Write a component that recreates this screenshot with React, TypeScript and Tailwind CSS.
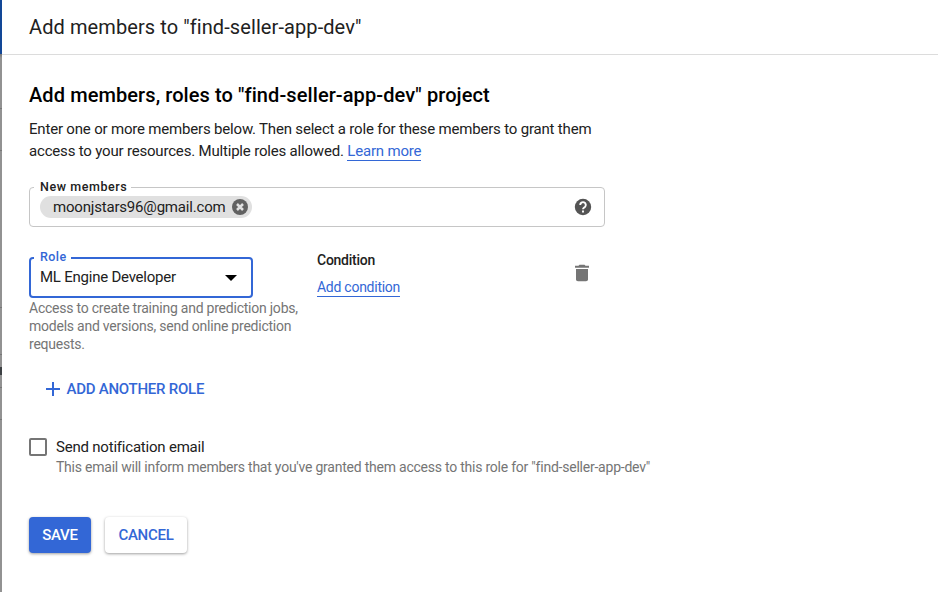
function BackgroundPage() {
  return (
    <div className="relative h-full w-[2px] shrink-0 bg-[#929292]">
      <div className="h-[54px] bg-[#124797]" />
      <div className="h-[4px] bg-gradient-to-b from-[#777] to-[#929292]" />
      <div className="absolute top-[108px] h-px w-full bg-[#777]" />
      <div className="absolute top-[150px] h-px w-full bg-[#777]" />
      <div className="absolute top-[307px] h-px w-full bg-[#777]" />
      <div className="absolute top-[354px] h-px w-full bg-[#777]" />
      <div className="absolute top-[367px] h-[8px] w-full bg-[#3c4043]" />
      <div className="absolute top-[387px] h-px w-full bg-[#777]" />
      <div className="absolute top-[419px] h-px w-full bg-[#777]" />
    </div>
  );
}

export default function App() {
  return (
    <main className="flex h-[592px] w-full overflow-hidden bg-white font-['Roboto',sans-serif] text-[#212121]">
      <BackgroundPage />
      <div className="min-w-0 flex-1 whitespace-nowrap">
        <header className="flex h-[55px] items-center border-b border-[#dcdcdc] pl-[27px] text-[20px] tracking-[0.09px]">
          Add members to "find-seller-app-dev"
        </header>
        <form className="pl-[27px] pt-7">
          <h1 className="text-[20px] font-medium leading-6 tracking-[0.09px] text-black">
            Add members, roles to "find-seller-app-dev" project
          </h1>
          <p className="mt-[11px] text-[15px] leading-[22px] tracking-[-0.185px]">
            Enter one or more members below. Then select a role for these members to grant them
            <br />
            access to your resources. Multiple roles allowed.{" "}
            <a className="inline-block h-[20px] border-b border-[#3367d6] leading-[20px] text-[#3367d6]">Learn more</a>
          </p>

          <div className="relative mt-[25px] flex h-[40px] w-[576px] items-center justify-between rounded-[4px] border border-[#c6c6c6] pl-[10px] pr-[11.5px]">
            <label className="absolute -top-[9px] left-[4px] bg-white pl-[6px] pr-[4px] text-[12.5px] font-medium leading-4 tracking-[0.57px]">New members</label>
            <div className="flex h-[22px] w-[212px] items-center rounded-full bg-[#e0e0e0] pl-[13px] text-[15px] leading-[22px] tracking-[-0.19px]">
              <span className="w-[177px]">moonjstars96@gmail.com</span>
              <svg viewBox="0 0 20 20" className="size-5">
                <circle cx="10" cy="10" r="8" fill="#616161" />
                <path d="M7 7l6 6M13 7l-6 6" stroke="#e0e0e0" strokeWidth="2.5" />
              </svg>
            </div>
            <svg viewBox="0 0 20 20" className="-mt-px size-5">
              <circle cx="10" cy="10" r="8.2" fill="#545454" />
              <path d="M7.200 8a2.800 2.800 0 1 1 4.700 2c-1.100.9-1.900 1.200-1.900 2.300M10 13.500v2" fill="none" stroke="#fff" strokeWidth="1.900" />
            </svg>
          </div>

          <div className="mt-[30px] flex">
            <div className="w-[289px]">
              <div className="relative flex h-[41px] w-[224px] items-center justify-between rounded-[4px] border-2 border-[#3367d6] pl-[9px] pr-[14px] text-[15px] tracking-[-0.23px]">
                <label className="absolute -top-[10px] left-[3px] bg-white pl-[6px] pr-[4px] text-[12.5px] font-medium leading-4 tracking-[0.44px] text-[#3367d6]">Role</label>
                <span>ML Engine Developer</span>
                <svg viewBox="0 0 12 6" className="h-[6px] w-[12px]"><path d="M0 0h12L6 6z" /></svg>
              </div>
              <p className="mt-px text-[14px] leading-[18px] tracking-[-0.23px] text-[#757575]">
                Access to create training and prediction jobs,<br />models and versions, send online prediction<br />requests.
              </p>
            </div>
            <div className="-ml-px flex w-[258px] flex-col items-start">
              <div className="-mt-[7px] h-5 text-[14px] font-medium leading-5 tracking-[-0.26px]">Condition</div>
              <a className="mt-[8px] h-[19px] border-b border-[#3367d6] text-[14px] leading-[19px] tracking-[-0.26px] text-[#3367d6]">Add condition</a>
            </div>
            <svg viewBox="0 0 14 18" className="mt-[7px] h-[18px] w-[14px]" fill="#757575">
              <path d="M1 15.500c0 1.100.9 1.700 2 1.700h8c1.100 0 2-.6 2-1.700V5H1v10.500zM14 1.700h-3.500l-1-1h-5l-1 1H0v2h14v-2z" />
            </svg>
          </div>

          <button type="button" className="ml-[15.5px] mt-[26px] flex h-5 items-center text-[15px] font-medium leading-5 tracking-[-0.25px] text-[#3367d6]">
            <svg viewBox="0 0 16 16" className="mr-[6px] size-4"><path d="M8 1v14M1 8h14" stroke="currentColor" strokeWidth="2" /></svg>
            ADD ANOTHER ROLE
          </button>

          <div className="mt-[38px] flex">
            <span className="mt-px size-[18px] rounded-[2px] border-2 border-[#757575]" />
            <div className="ml-[9px]">
              <div className="text-[15px] leading-5 tracking-[-0.21px]">Send notification email</div>
              <p className="text-[14px] leading-5 tracking-[-0.23px] text-[#757575]">This email will inform members that you've granted them access to this role for "find-seller-app-dev"</p>
            </div>
          </div>

          <div className="mt-[40px] flex gap-[14px] text-[15px] font-medium tracking-[-0.25px]">
            <button type="button" className="h-9 w-[62px] rounded-[4px] bg-[#3367d6] text-white shadow-[0_1px_3px_rgba(0,0,0,.38)]">SAVE</button>
            <button type="button" className="h-9 w-[82px] rounded-[4px] bg-white text-[#3367d6] shadow-[0_1px_3px_rgba(0,0,0,.38)]">CANCEL</button>
          </div>
        </form>
      </div>
    </main>
  );
}
